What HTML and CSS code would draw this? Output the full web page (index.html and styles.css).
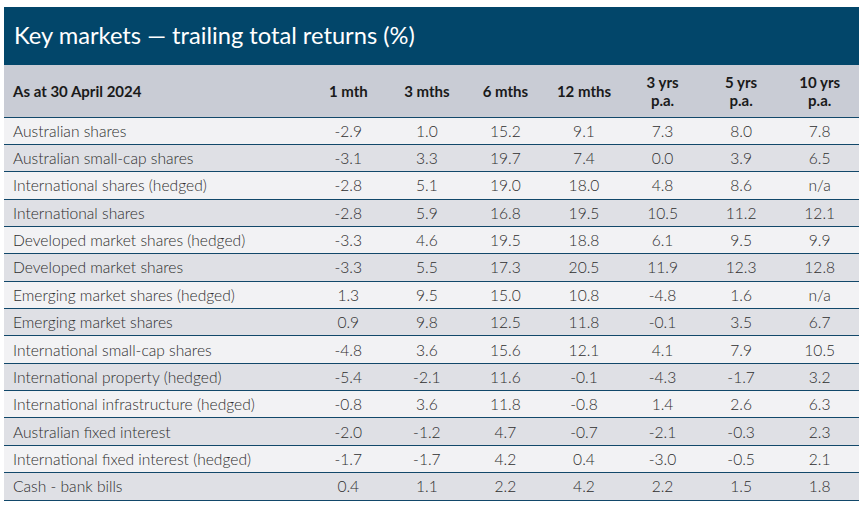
FILE: index.html
```html
<!DOCTYPE html>
<html>
<head>
<meta charset="utf-8">
<link rel="stylesheet" href="styles.css">
</head>
<body>
<div class="panel">
  <div class="title">Key markets — trailing total returns (%)</div>
  <table class="returns">
    <colgroup>
      <col class="c-label"><col class="c-num"><col class="c-num"><col class="c-num"><col class="c-num"><col class="c-num"><col class="c-num"><col class="c-num">
    </colgroup>
    <thead>
      <tr>
        <th class="label">As at 30 April 2024</th>
        <th>1 mth</th>
        <th>3 mths</th>
        <th>6 mths</th>
        <th>12 mths</th>
        <th>3 yrs<br>p.a.</th>
        <th>5 yrs<br>p.a.</th>
        <th>10 yrs<br>p.a.</th>
      </tr>
    </thead>
    <tbody>
      <tr><td class="label">Australian shares</td><td>-2.9</td><td>1.0</td><td>15.2</td><td>9.1</td><td>7.3</td><td>8.0</td><td>7.8</td></tr>
      <tr><td class="label">Australian small-cap shares</td><td>-3.1</td><td>3.3</td><td>19.7</td><td>7.4</td><td>0.0</td><td>3.9</td><td>6.5</td></tr>
      <tr><td class="label">International shares (hedged)</td><td>-2.8</td><td>5.1</td><td>19.0</td><td>18.0</td><td>4.8</td><td>8.6</td><td>n/a</td></tr>
      <tr><td class="label">International shares</td><td>-2.8</td><td>5.9</td><td>16.8</td><td>19.5</td><td>10.5</td><td>11.2</td><td>12.1</td></tr>
      <tr><td class="label">Developed market shares (hedged)</td><td>-3.3</td><td>4.6</td><td>19.5</td><td>18.8</td><td>6.1</td><td>9.5</td><td>9.9</td></tr>
      <tr><td class="label">Developed market shares</td><td>-3.3</td><td>5.5</td><td>17.3</td><td>20.5</td><td>11.9</td><td>12.3</td><td>12.8</td></tr>
      <tr><td class="label">Emerging market shares (hedged)</td><td>1.3</td><td>9.5</td><td>15.0</td><td>10.8</td><td>-4.8</td><td>1.6</td><td>n/a</td></tr>
      <tr><td class="label">Emerging market shares</td><td>0.9</td><td>9.8</td><td>12.5</td><td>11.8</td><td>-0.1</td><td>3.5</td><td>6.7</td></tr>
      <tr><td class="label">International small-cap shares</td><td>-4.8</td><td>3.6</td><td>15.6</td><td>12.1</td><td>4.1</td><td>7.9</td><td>10.5</td></tr>
      <tr><td class="label">International property (hedged)</td><td>-5.4</td><td>-2.1</td><td>11.6</td><td>-0.1</td><td>-4.3</td><td>-1.7</td><td>3.2</td></tr>
      <tr><td class="label">International infrastructure (hedged)</td><td>-0.8</td><td>3.6</td><td>11.8</td><td>-0.8</td><td>1.4</td><td>2.6</td><td>6.3</td></tr>
      <tr><td class="label">Australian fixed interest</td><td>-2.0</td><td>-1.2</td><td>4.7</td><td>-0.7</td><td>-2.1</td><td>-0.3</td><td>2.3</td></tr>
      <tr><td class="label">International fixed interest (hedged)</td><td>-1.7</td><td>-1.7</td><td>4.2</td><td>0.4</td><td>-3.0</td><td>-0.5</td><td>2.1</td></tr>
      <tr><td class="label">Cash - bank bills</td><td>0.4</td><td>1.1</td><td>2.2</td><td>4.2</td><td>2.2</td><td>1.5</td><td>1.8</td></tr>
    </tbody>
  </table>
</div>
</body>
</html>
```
FILE: styles.css
```css
html, body {
  margin: 0;
  padding: 0;
  background: #ffffff;
}
body {
  padding: 7px 3px 0 4px;
  font-family: "Lato", "Open Sans", sans-serif;
}
.panel {
  width: 855px;
}
.title {
  background: #02466a;
  color: #ffffff;
  height: 58px;
  box-sizing: border-box;
  padding: 15px 0 0 10px;
  font-size: 23.7px;
  font-weight: 400;
  line-height: 27px;
}
.returns {
  width: 855px;
  border-collapse: collapse;
  table-layout: fixed;
}
.c-label { width: 305px; }
.c-num { width: 78.57px; }
.returns thead tr {
  background: #c9ccd5;
  height: 52px;
}
.returns th {
  font-size: 15px;
  font-weight: 700;
  color: #1a1a1a;
  line-height: 18px;
  text-align: center;
  padding: 0;
  border-bottom: 1px solid #12486a;
}
.returns th.label {
  text-align: left;
  padding-left: 9px;
}
.returns tbody tr {
  height: 27.36px;
}
.returns tbody tr:nth-child(odd) { background: #f2f2f4; }
.returns tbody tr:nth-child(even) { background: #dfe0e5; }
.returns td {
  font-size: 15.6px;
  font-weight: 300;
  color: #2e2e2e;
  text-align: center;
  padding: 0;
  border-bottom: 1px solid #12486a;
  white-space: nowrap;
}
.returns td.label {
  text-align: left;
  padding-left: 9px;
}
```
